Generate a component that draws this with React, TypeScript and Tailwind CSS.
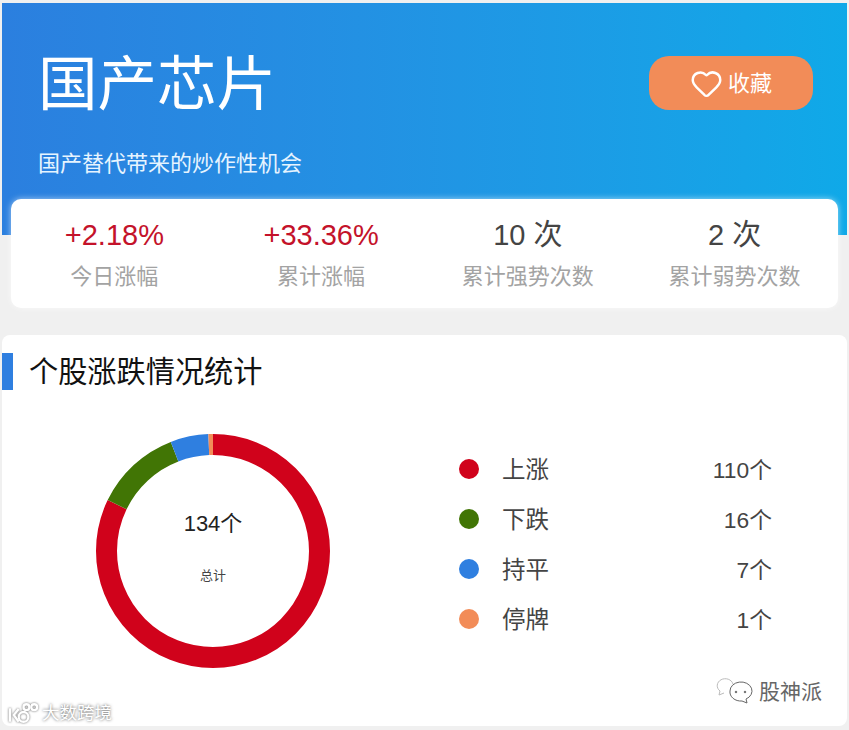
import { Heart } from "lucide-react";

const stats = [
  { value: "+2.18%", label: "今日涨幅", up: true },
  { value: "+33.36%", label: "累计涨幅", up: true },
  { value: "10 次", label: "累计强势次数", up: false },
  { value: "2 次", label: "累计弱势次数", up: false },
];

const legend = [
  { name: "上涨", count: 110, dot: "bg-[#d0021b]", color: "#d0021b" },
  { name: "下跌", count: 16, dot: "bg-[#417505]", color: "#417505" },
  { name: "持平", count: 7, dot: "bg-[#2f7fe0]", color: "#2f7fe0" },
  { name: "停牌", count: 1, dot: "bg-[#f28c58]", color: "#f28c58" },
];

function Donut() {
  const total = 134;
  const r = 106.5;
  const circumference = 2 * Math.PI * r;
  let offset = 0;

  return (
    <div className="relative w-[234px] h-[234px]">
      <svg width="234" height="234" viewBox="0 0 234 234" className="-rotate-90">
        {legend.map((item) => {
          const len = (item.count / total) * circumference;
          const seg = (
            <circle
              key={item.name}
              cx="117"
              cy="117"
              r={r}
              fill="none"
              stroke={item.color}
              strokeWidth="21"
              strokeDasharray={`${len} ${circumference - len}`}
              strokeDashoffset={-offset}
            />
          );
          offset += len;
          return seg;
        })}
      </svg>
      <div className="absolute inset-0 flex flex-col items-center">
        <div className="mt-[74px] text-[22px] leading-[32px] text-[#222]">134个</div>
        <div className="mt-[28px] text-[13px] leading-[16px] text-[#444]">总计</div>
      </div>
    </div>
  );
}

export default function App() {
  return (
    <div className="relative w-[849px] h-[730px] overflow-hidden bg-[#f0f0f0] pt-[3px] px-[2px] font-['Liberation_Sans','Noto_Sans_CJK_SC',sans-serif]">
      <div className="h-[232px] bg-gradient-to-r from-[#2b7fdf] to-[#0fa9e8] pt-[48px] pl-[36px] pr-[34px]">
        <div className="flex items-start justify-between">
          <h1 className="text-[59.5px] leading-[68px] font-normal text-white">国产芯片</h1>
          <button className="mt-[5px] w-[164px] h-[54px] rounded-[20px] bg-[#f28c58] flex items-center justify-center gap-[5px] text-white text-[22px]">
            <Heart size={33} strokeWidth={1.8} />
            <span>收藏</span>
          </button>
        </div>
        <p className="mt-[29px] text-[22px] leading-[32px] text-[#e6f4ff]">国产替代带来的炒作性机会</p>
      </div>

      <div className="relative -mt-[36px] mx-[9px] h-[109px] rounded-[10px] bg-white shadow-[0_0_6px_rgba(255,255,255,0.6)] grid grid-cols-4 pt-[17px]">
        {stats.map((s) => (
          <div key={s.label} className="flex flex-col items-center">
            <div className={`text-[29px] leading-[38px] ${s.up ? "text-[#c4122a]" : "text-[#444]"}`}>{s.value}</div>
            <div className="mt-[7px] text-[22px] leading-[32px] text-[#a3a3a3]">{s.label}</div>
          </div>
        ))}
      </div>

      <div className="mt-[27px] h-[391px] rounded-[8px] bg-white pt-[18px]">
        <div className="flex items-center h-[37px]">
          <div className="w-[11px] h-[37px] bg-[#2f7fe0]" />
          <h2 className="ml-[16px] pt-[1px] text-[29.2px] leading-[37px] font-normal text-[#111]">个股涨跌情况统计</h2>
        </div>
        <div className="flex mt-[44px]">
          <div className="ml-[94px]">
            <Donut />
          </div>
          <div className="ml-[129px] w-[313px] pt-[10px] flex flex-col">
            {legend.map((item) => (
              <div key={item.name} className="h-[50px] flex items-center">
                <span className={`w-[20px] h-[20px] rounded-full ${item.dot}`} />
                <span className="ml-[23px] pt-[1px] text-[23.5px] leading-[32px] text-[#444]">{item.name}</span>
                <span className="ml-auto pt-[1px] text-[22.8px] leading-[32px] text-[#444]">{item.count}个</span>
              </div>
            ))}
          </div>
        </div>
      </div>

      {/* watermarks laid over the picture */}
      <div className="absolute left-[8px] top-[701px] flex items-center gap-[1px] text-white [text-shadow:0_0_3px_#555]">
        <svg width="33" height="22" viewBox="0 0 34 22" fill="none" stroke="#fff" strokeWidth="2.4" style={{ filter: "drop-shadow(0 0 1px #666)" }}>
          <path d="M2 6v14M11 7 6 13l5 7" />
          <circle cx="16" cy="15" r="5" />
          <circle cx="19" cy="5" r="3" />
          <circle cx="27" cy="5" r="3" />
        </svg>
        <span className="text-[17.5px] leading-[24px]">大数跨境</span>
      </div>
      <div className="absolute left-[716px] top-[677px] flex items-center gap-[5px] text-[#666] [text-shadow:0_0_2px_#fff]">
        <svg width="38" height="30" viewBox="0 0 38 30" fill="none" stroke="#666" strokeWidth="1">
          <path d="M17 7a8 7 0 1 0-13 7l-1 4 5-2" stroke="#bbb" />
          <path d="M14 14a11 9 0 1 1 16 8l1 4-5-2a11 9 0 0 1-12-10Z" />
          <circle cx="20" cy="15" r="0.8" fill="#666" />
          <circle cx="29" cy="15" r="0.8" fill="#666" />
        </svg>
        <span className="text-[21px] leading-[30px]">股神派</span>
      </div>
    </div>
  );
}
